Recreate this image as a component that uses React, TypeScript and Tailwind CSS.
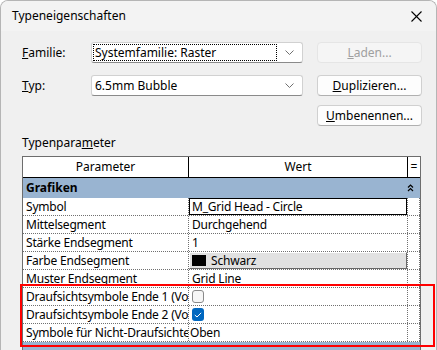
import React from "react";

const font = { fontFamily: '"Noto Sans", "Segoe UI", sans-serif' };

function Chevron() {
  return (
    <svg width="9" height="5" viewBox="0 0 9 5" className="shrink-0">
      <polyline points="0.5,0.5 4.5,4.5 8.5,0.5" fill="none" stroke="#707070" strokeWidth="1" />
    </svg>
  );
}

function Combo({ text, focus }: { text: string; focus?: boolean }) {
  return (
    <div className="w-[212px] h-[21px] bg-white border border-[#d1d1d1] border-b-[#8a8a8a] rounded-[3px] flex items-center pl-[1px] pr-[8px]">
      <div className={`flex-1 h-[17px] flex items-center pl-[1px] ${focus ? "border border-dotted border-black" : "border border-transparent"}`}>
        <span className="leading-none">{text}</span>
      </div>
      <div className="ml-[8px]"><Chevron /></div>
    </div>
  );
}

function Btn({ children, disabled }: { children: React.ReactNode; disabled?: boolean }) {
  return (
    <div
      className={`w-[105px] h-[21px] rounded-[4px] border flex items-center justify-center ${
        disabled ? "bg-[#f5f5f5] border-[#e5e5e5] text-[#a0a0a0]" : "bg-[#fdfdfd] border-[#d0d0d0] border-b-[#b0b0b0] text-black"
      }`}
    >
      {children}
    </div>
  );
}

function Row({ label, children }: { label: string; children?: React.ReactNode }) {
  return (
    <div className="flex h-[18px] border-b border-dotted border-[#707070] tracking-[-0.2px]">
      <div className="w-[166px] shrink-0 border-r border-dotted border-[#707070] pl-[3px] overflow-hidden whitespace-nowrap flex items-center">
        <span className="whitespace-nowrap">{label}</span>
      </div>
      <div className="w-[219px] shrink-0 border-r border-dotted border-[#707070] flex items-center overflow-hidden whitespace-nowrap">
        {children}
      </div>
      <div className="w-[12px] shrink-0 border-r border-dotted border-[#707070]" />
    </div>
  );
}

export default function App() {
  return (
    <div
      className="w-[437px] h-[350px] overflow-hidden bg-[#f0f0f0] border-x border-t border-[#b5b5b5] rounded-t-[8px] text-[12px] text-black relative"
      style={font}
    >
      {/* Title bar */}
      <div className="h-[30px] bg-[#f3f3f3] flex items-center pl-[11px] pr-[10px]">
        <span className="flex-1">Typeneigenschaften</span>
        <svg width="11" height="11" viewBox="0 0 11 11" className="mr-[4px]">
          <line x1="0.5" y1="0.5" x2="10.5" y2="10.5" stroke="#000" strokeWidth="1.1" />
          <line x1="10.5" y1="0.5" x2="0.5" y2="10.5" stroke="#000" strokeWidth="1.1" />
        </svg>
      </div>

      <div className="pl-[21px] flex flex-col">
        <div className="flex items-center h-[21px] mt-[11px]">
          <div className="w-[69px]"><u>F</u>amilie:</div>
          <Combo text="Systemfamilie: Raster" focus />
          <div className="ml-[14px]">
            <Btn disabled><u>L</u>aden...</Btn>
          </div>
        </div>
        <div className="flex items-center h-[21px] mt-[12px]">
          <div className="w-[69px]"><u>T</u>yp:</div>
          <Combo text="6.5mm Bubble" />
          <div className="ml-[14px]">
            <Btn><u>D</u>uplizieren...</Btn>
          </div>
        </div>
        <div className="flex items-center h-[21px] mt-[9px] pl-[295px]">
          <Btn><u>U</u>mbenennen...</Btn>
        </div>
        <div className="mt-[9px] h-[16px] leading-[16px]">
          Typenpara<u>m</u>eter
        </div>

        {/* Table */}
        <div className="mt-[5px] w-[399px] border border-[#6d6d6d] bg-white">
          <div className="flex h-[21px] border-b border-black">
            <div className="w-[166px] border-r border-black flex items-center justify-center">Parameter</div>
            <div className="w-[219px] border-r border-black flex items-center justify-center">Wert</div>
            <div className="w-[12px] flex items-center justify-center">=</div>
          </div>
          <div className="flex h-[20px] bg-[#99b4d1] items-center pl-[3px]">
            <span className="flex-1 font-bold">Grafiken</span>
            <svg width="7" height="8" viewBox="0 0 7 8" className="mr-[6px]">
              <polyline points="1,3.5 3.5,1 6,3.5" fill="none" stroke="#000" strokeWidth="1.2" />
              <polyline points="1,7 3.5,4.5 6,7" fill="none" stroke="#000" strokeWidth="1.2" />
            </svg>
          </div>
          <Row label="Symbol">
            <div className="w-full h-full border border-black pl-[2px] flex items-center bg-white">M_Grid Head - Circle</div>
          </Row>
          <Row label="Mittelsegment">
            <span className="pl-[3px]">Durchgehend</span>
          </Row>
          <Row label="Stärke Endsegment">
            <span className="pl-[3px]">1</span>
          </Row>
          <Row label="Farbe Endsegment">
            <div className="w-full h-full bg-[#e1e1e1] border border-t-white border-l-white border-r-[#696969] border-b-[#696969] flex items-center pl-[2px]">
              <span className="w-[14px] h-[11px] bg-black mr-[5px]" />
              Schwarz
            </div>
          </Row>
          <Row label="Muster Endsegment">
            <span className="pl-[3px]">Grid Line</span>
          </Row>
          <Row label="Draufsichtsymbole Ende 1 (Vorgabe)">
            <span className="ml-[3px] w-[12px] h-[13px] rounded-[3px] border border-[#8a8a8a] bg-[#f6f6f6]" />
          </Row>
          <Row label="Draufsichtsymbole Ende 2 (Vorgabe)">
            <span className="ml-[3px] w-[12px] h-[13px] rounded-[3px] bg-[#0067c0] flex items-center justify-center">
              <svg width="8" height="6" viewBox="0 0 8 6">
                <polyline points="0.8,3 3,5 7.2,0.8" fill="none" stroke="#fff" strokeWidth="1" />
              </svg>
            </span>
          </Row>
          <Row label="Symbole für Nicht-Draufsichten">
            <span className="pl-[1px]">Oben</span>
          </Row>
          <div className="h-[20px] bg-[#99b4d1]" />
        </div>
      </div>

      {/* Red annotation */}
      <div className="absolute left-[19px] top-[283px] w-[415px] h-[63px] border-2 border-[#ff0000] pointer-events-none" />
    </div>
  );
}
